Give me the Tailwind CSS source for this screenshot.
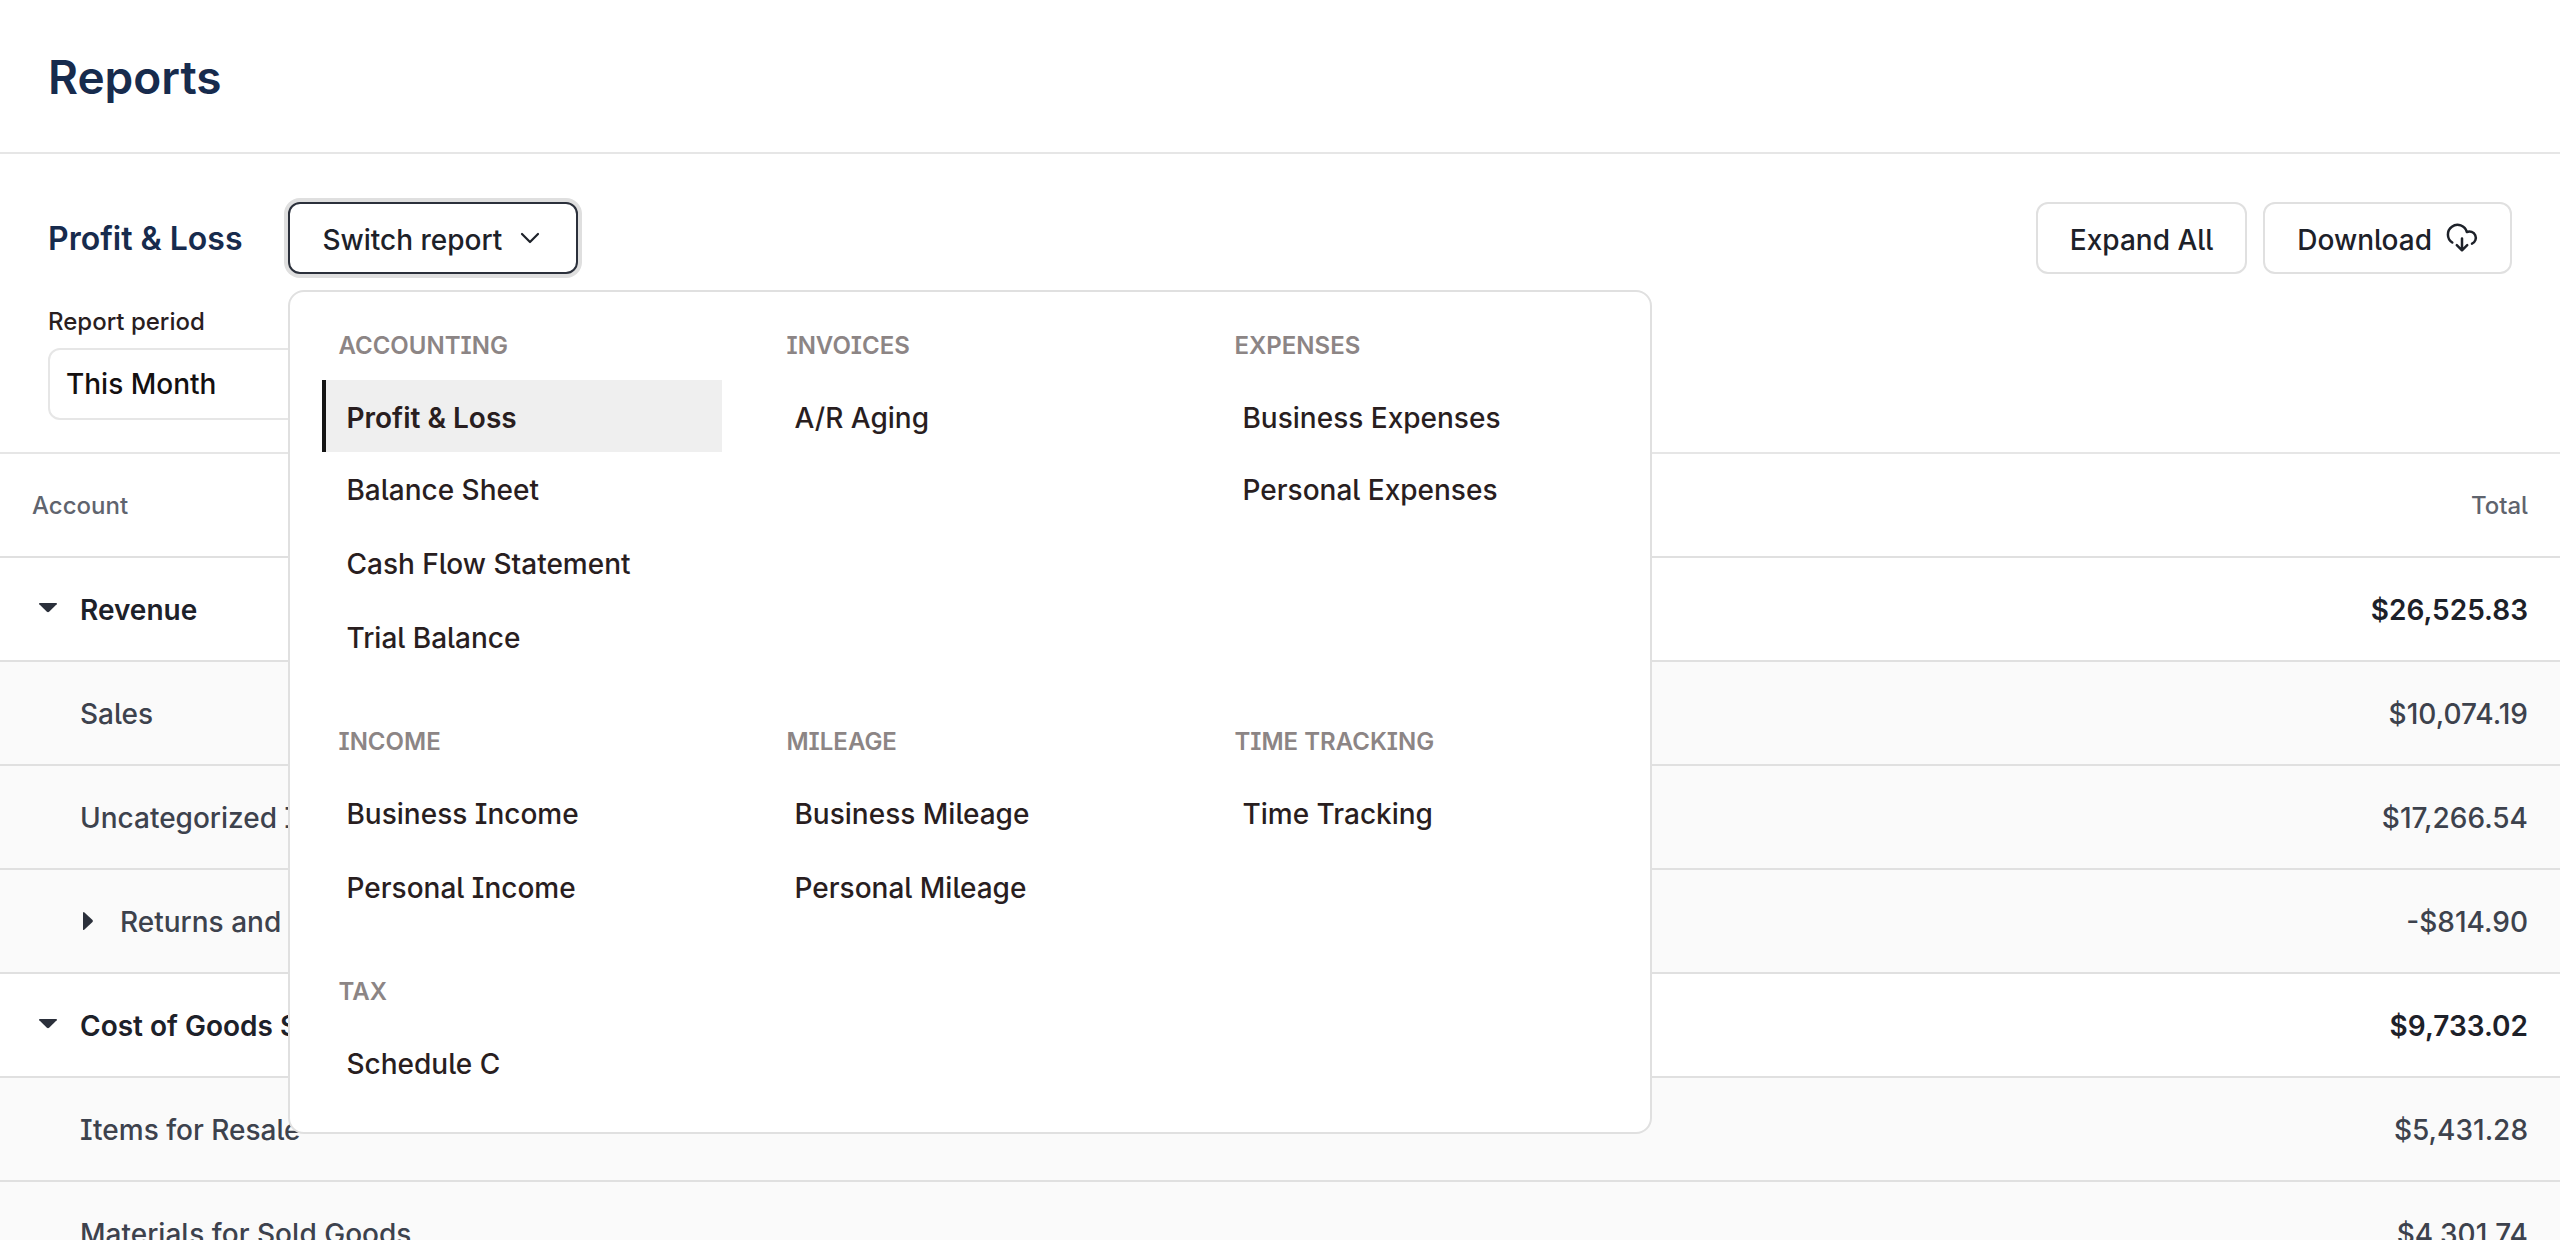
<!DOCTYPE html>
<html lang="en">
<head>
    <meta charset="UTF-8">
    <meta name="viewport" content="width=device-width, initial-scale=1.0">
    <title>Reports</title>
    <script src="https://cdn.jsdelivr.net/npm/@tailwindcss/browser@4"></script>
    <style>
        body {
            font-family: 'Inter', 'Liberation Sans', sans-serif;
            /* tailed l and serifed I */
            font-feature-settings: 'cv05', 'cv08';
        }
    </style>
</head>
<body class="h-screen overflow-hidden bg-white text-[28px] leading-[36px] font-medium text-[#1d2129]">

    <header class="border-b-2 border-[#e6e6e6] px-12 py-12">
        <h1 class="pt-[2px] text-[46px] leading-[54px] font-semibold text-[#172b4d]">Reports</h1>
    </header>

    <main>
        <section class="px-12 pt-12 pb-8 border-b-2 border-[#e6e6e6]">
            <div class="flex items-center justify-between">
                <div class="flex items-center gap-[46px]">
                    <h2 class="pt-[2px] text-[32px] leading-[40px] font-semibold text-[#172b4d]">Profit &amp; Loss</h2>
                    <div class="relative">
                        <button type="button" aria-expanded="true" class="flex h-[72px] items-center gap-[14px] rounded-xl border-2 border-[#2b303b] bg-white px-8 ring-4 ring-[#dfdfdf]">
                            <span class="pt-1">Switch report</span>
                            <svg class="size-7" viewBox="0 0 28 28" fill="none" stroke="currentColor" stroke-width="2.2" stroke-linecap="round" stroke-linejoin="round"><path d="M6 10l8 8 8-8"/></svg>
                        </button>

                        <!-- report switcher -->
                        <nav class="absolute left-0 top-22 z-10 grid w-[1364px] grid-cols-[repeat(3,400px)] gap-x-12 gap-y-[46px] rounded-2xl border-2 border-[#e0e0e0] bg-white p-8 text-[#291e1f]">
                            <div>
                                <h3 class="h-14 pl-4 pt-1 text-[24px] leading-[36px] font-semibold text-[#8c8585]">ACCOUNTING</h3>
                                <a href="#" aria-current="page" class="flex h-[72px] items-center border-l-4 border-[#141414] bg-[#efefef] pl-5 pt-1 font-semibold">Profit &amp; Loss</a>
                                <a href="#" class="flex h-[74px] items-center pl-6 pt-[2px]">Balance Sheet</a>
                                <a href="#" class="flex h-[74px] items-center pl-6 pt-[2px]">Cash Flow Statement</a>
                                <a href="#" class="flex h-[74px] items-center pl-6 pt-[2px]">Trial Balance</a>
                            </div>
                            <div>
                                <h3 class="h-14 pl-4 pt-1 text-[24px] leading-[36px] font-semibold text-[#8c8585]">INVOICES</h3>
                                <a href="#" class="flex h-[72px] items-center pl-6 pt-1">A/R Aging</a>
                            </div>
                            <div>
                                <h3 class="h-14 pl-4 pt-1 text-[24px] leading-[36px] font-semibold text-[#8c8585]">EXPENSES</h3>
                                <a href="#" class="flex h-[72px] items-center pl-6 pt-1">Business Expenses</a>
                                <a href="#" class="flex h-[74px] items-center pl-6 pt-[2px]">Personal Expenses</a>
                            </div>
                            <div>
                                <h3 class="h-14 pl-4 pt-1 text-[24px] leading-[36px] font-semibold text-[#8c8585]">INCOME</h3>
                                <a href="#" class="flex h-[74px] items-center pl-6 pt-[2px]">Business Income</a>
                                <a href="#" class="flex h-[74px] items-center pl-6 pt-[2px]">Personal Income</a>
                            </div>
                            <div>
                                <h3 class="h-14 pl-4 pt-1 text-[24px] leading-[36px] font-semibold text-[#8c8585]">MILEAGE</h3>
                                <a href="#" class="flex h-[74px] items-center pl-6 pt-[2px]">Business Mileage</a>
                                <a href="#" class="flex h-[74px] items-center pl-6 pt-[2px]">Personal Mileage</a>
                            </div>
                            <div>
                                <h3 class="h-14 pl-4 pt-1 text-[24px] leading-[36px] font-semibold text-[#8c8585]">TIME TRACKING</h3>
                                <a href="#" class="flex h-[74px] items-center pl-6 pt-[2px]">Time Tracking</a>
                            </div>
                            <div>
                                <h3 class="h-14 pl-4 pt-1 text-[24px] leading-[36px] font-semibold text-[#8c8585]">TAX</h3>
                                <a href="#" class="flex h-[74px] items-center pl-6 pt-[2px]">Schedule C</a>
                            </div>
                        </nav>
                    </div>
                </div>
                <div class="flex gap-4">
                    <button type="button" class="flex h-[72px] items-center rounded-xl border-2 border-[#e0e0e0] bg-white px-8">
                        <span class="pt-1">Expand All</span>
                    </button>
                    <button type="button" class="flex h-[72px] items-center gap-[14px] rounded-xl border-2 border-[#e0e0e0] bg-white px-8">
                        <span class="pt-1">Download</span>
                        <svg class="size-8" viewBox="0 0 32 32" fill="none" stroke="currentColor" stroke-width="2.5" stroke-linecap="round" stroke-linejoin="round">
                            <path d="M6.300 20.500A9.600 9.600 0 1 1 20.800 10A6.300 6.300 0 0 1 26 21.700"/>
                            <path d="M16 16.500v11.500M10.800 23.200 16 28.300l5.200-5.100"/>
                        </svg>
                    </button>
                </div>
            </div>

            <div class="mt-8 flex w-[400px] flex-col gap-[10px]">
                <label for="period" class="text-[24px] leading-[32px] text-[#291e1f]">Report period</label>
                <select id="period" class="h-[72px] appearance-none rounded-xl border-2 border-[#e6e6e6] bg-white px-4 font-medium text-[#141010]">
                    <option>This Month</option>
                    <option>Last Month</option>
                    <option>This Year</option>
                </select>
            </div>
        </section>

        <table class="w-full border-separate border-spacing-0 text-[#3d424d]">
            <thead>
                <tr class="h-[104px] text-[24px] text-[#5f646e]">
                    <th class="border-b-2 border-[#e0e0e0] pt-[2px] pl-8 text-left font-medium">Account</th>
                    <th class="border-b-2 border-[#e0e0e0] pt-[2px] pr-8 text-right font-medium">Total</th>
                </tr>
            </thead>
            <tbody>
                <tr class="h-[104px] font-semibold text-[#1d2129]">
                    <td class="border-b-2 border-[#e0e0e0] pt-[2px] pl-8">
                        <div class="flex items-center gap-4">
                            <button type="button" aria-label="Collapse Revenue" class="size-8"><svg viewBox="0 0 32 32" fill="#2b303b"><path d="M7.600 9h16.800q1 .3.3 1.200l-7.600 7.600q-1.100.9-2.200 0L7.300 10.200Q6.600 9.300 7.600 9z"/></svg></button>
                            Revenue
                        </div>
                    </td>
                    <td class="border-b-2 border-[#e0e0e0] pt-[2px] pr-8 text-right">$26,525.83</td>
                </tr>
                <tr class="h-[104px] bg-[#fafafa]">
                    <td class="border-b-2 border-[#e0e0e0] pt-[2px] pl-20">Sales</td>
                    <td class="border-b-2 border-[#e0e0e0] pt-[2px] pr-8 text-right">$10,074.19</td>
                </tr>
                <tr class="h-[104px] bg-[#fafafa]">
                    <td class="border-b-2 border-[#e0e0e0] pt-[2px] pl-20">Uncategorized Income</td>
                    <td class="border-b-2 border-[#e0e0e0] pt-[2px] pr-8 text-right">$17,266.54</td>
                </tr>
                <tr class="h-[104px] bg-[#fafafa]">
                    <td class="border-b-2 border-[#e0e0e0] pt-[2px] pl-[72px]">
                        <div class="flex items-center gap-4">
                            <button type="button" aria-label="Expand Returns and Discounts" class="size-8"><svg viewBox="0 0 32 32" fill="#2b303b"><path d="M11 6.600v16.800q.3 1 1.200.3l8.300-7.600q.9-1.100 0-2.200L12.200 6.300Q11.300 5.600 11 6.600z"/></svg></button>
                            Returns and Discounts
                        </div>
                    </td>
                    <td class="border-b-2 border-[#e0e0e0] pt-[2px] pr-8 text-right">-$814.90</td>
                </tr>
                <tr class="h-[104px] font-semibold text-[#1d2129]">
                    <td class="border-b-2 border-[#e0e0e0] pt-[2px] pl-8">
                        <div class="flex items-center gap-4">
                            <button type="button" aria-label="Collapse Cost of Goods Sold" class="size-8"><svg viewBox="0 0 32 32" fill="#2b303b"><path d="M7.600 9h16.800q1 .3.3 1.200l-7.600 7.600q-1.100.9-2.200 0L7.300 10.200Q6.600 9.300 7.600 9z"/></svg></button>
                            Cost of Goods Sold
                        </div>
                    </td>
                    <td class="border-b-2 border-[#e0e0e0] pt-[2px] pr-8 text-right">$9,733.02</td>
                </tr>
                <tr class="h-[104px] bg-[#fafafa]">
                    <td class="border-b-2 border-[#e0e0e0] pt-[2px] pl-20">Items for Resale</td>
                    <td class="border-b-2 border-[#e0e0e0] pt-[2px] pr-8 text-right">$5,431.28</td>
                </tr>
                <tr class="h-[104px] bg-[#fafafa]">
                    <td class="border-b-2 border-[#e0e0e0] pt-[2px] pl-20">Materials for Sold Goods</td>
                    <td class="border-b-2 border-[#e0e0e0] pt-[2px] pr-8 text-right">$4,301.74</td>
                </tr>
            </tbody>
        </table>
    </main>
</body>
</html>
